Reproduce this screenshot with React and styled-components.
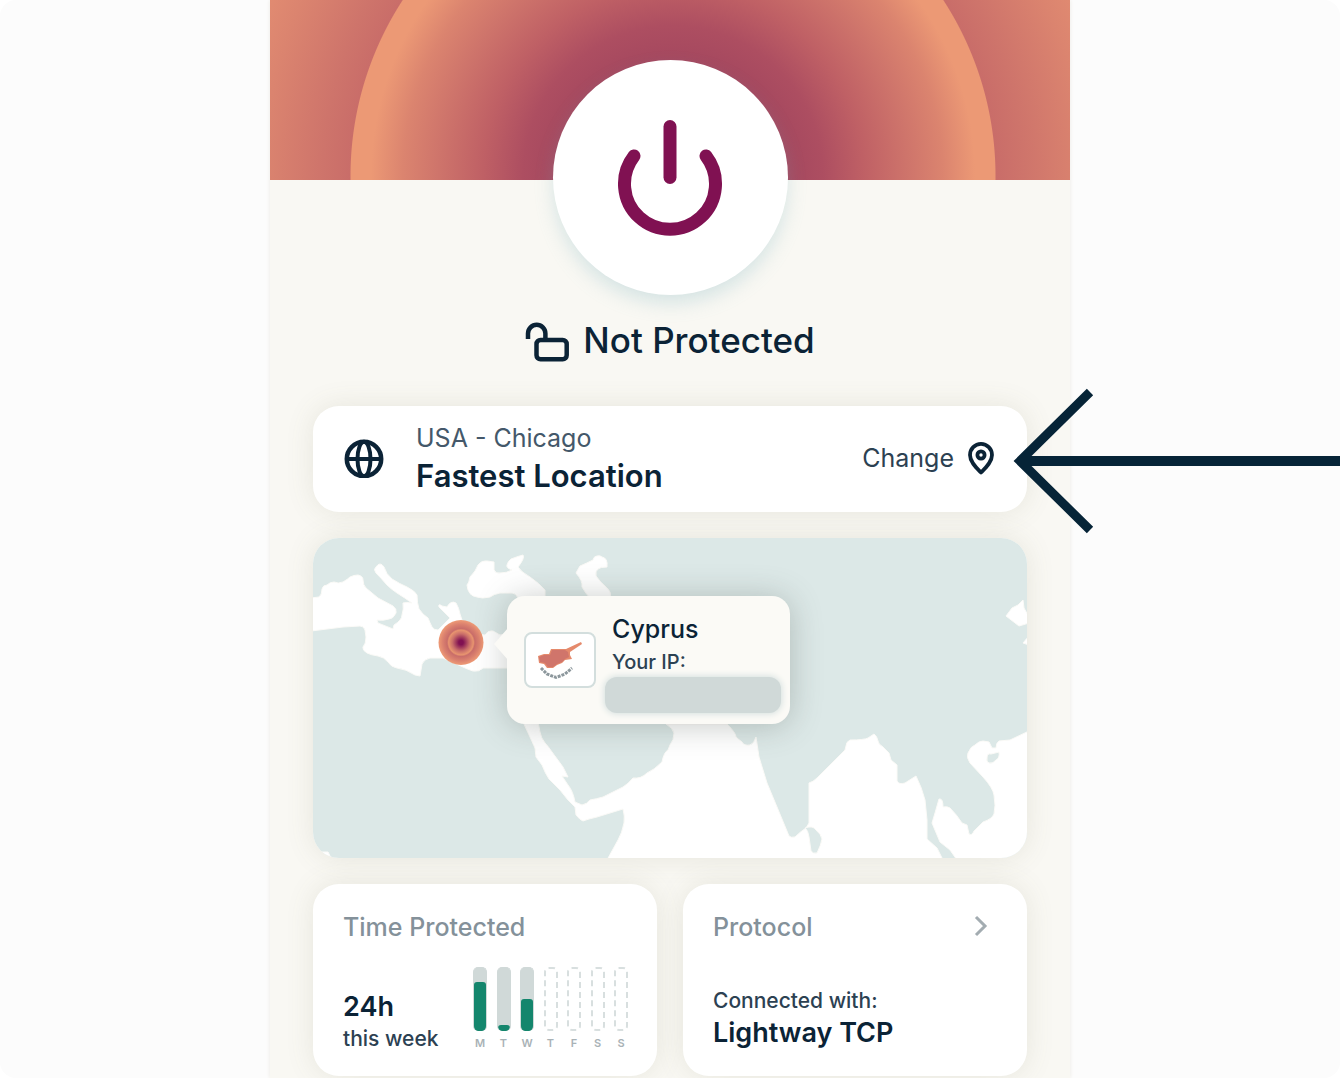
import styled, { createGlobalStyle } from "styled-components";

const GlobalStyle = createGlobalStyle`
  * {
    box-sizing: border-box;
  }

  body {
    margin: 0;
    background-color: #ffffff;
    color: #0b2336;
    font-family: Inter, "Liberation Sans", sans-serif;
  }

  h1, h2, p {
    margin: 0;
    font-weight: inherit;
  }

  button {
    padding: 0;
    border: none;
    background: none;
    color: inherit;
    font: inherit;
    cursor: pointer;
  }
`;

const Page = styled.div`
  min-height: 100vh;
  display: flex;
  justify-content: center;
  overflow: hidden;
  border-radius: 16px;
  background-color: #fcfcfc;
`;

const AppWindow = styled.main`
  width: 100%;
  max-width: 800px;
  display: flex;
  flex-direction: column;
  background-color: #f9f8f3;
  box-shadow: 0 0 4px #eceae4;
`;

const Hero = styled.div`
  height: 180px;
  background: radial-gradient(
    circle at calc(50% + 3px) 176px,
    #a5485f 116px,
    #ad4e61 150px,
    #bf6065 190px,
    #ce746b 234px,
    #db846f 270px,
    #ec9975 302px,
    #ec9975 322px,
    #c96d69 323px,
    #ce746b 350px,
    #db846f 410px,
    #e38d72 450px
  );
`;

const PowerButton = styled.button`
  width: 235px;
  height: 235px;
  margin: -120px auto 0;
  display: flex;
  align-items: center;
  justify-content: center;
  border-radius: 50%;
  background-color: #ffffff;
  box-shadow: 0 9px 20px -2px rgba(120, 175, 190, 0.3);
`;

const Status = styled.h1`
  margin-top: 23px;
  display: flex;
  align-items: center;
  justify-content: center;
  gap: 14px;
  font-size: 35px;
  font-weight: 500;
  line-height: 44px;
`;

const Content = styled.div`
  margin-top: 44px;
  padding: 0 43px 2px;
  display: flex;
  flex-direction: column;
  gap: 26px;
`;

const Card = styled.section`
  border-radius: 26px;
  background-color: #ffffff;
  box-shadow: 0 0 28px rgba(110, 105, 80, 0.13);
`;

const LocationCard = styled(Card)`
  position: relative;
  min-height: 106px;
  padding: 13px 32px 15px 31px;
  display: flex;
  align-items: center;
  gap: 32px;
`;

const LocationText = styled.div`
  flex: 1;
`;

const Region = styled.p`
  font-size: 25px;
  line-height: 36px;
  color: #44586a;
`;

const LocationName = styled.h2`
  font-size: 31px;
  font-weight: 600;
  line-height: 40px;
`;

const ChangeButton = styled.button`
  display: flex;
  align-items: center;
  gap: 13px;
  font-size: 25px;
  line-height: 36px;
  color: #2c4152;

  svg {
    color: #0b2336;
  }
`;

const Pointer = styled.svg`
  position: absolute;
  top: -18px;
  left: calc(100% - 14px);
  width: 50vw;
  height: 146px;
  stroke: #062437;
  fill: none;
  pointer-events: none;
`;

const MapCard = styled(Card)`
  position: relative;
  height: 320px;
`;

const WorldMap = styled.svg`
  display: block;
  width: 100%;
  height: 100%;
  border-radius: 26px;
  background-color: #dce8e7;
`;

const Popover = styled.div`
  position: absolute;
  top: 58px;
  left: 194px;
  width: 283px;
  height: 128px;
  padding: 0 8px 0 17px;
  display: flex;
  align-items: center;
  gap: 16px;
  border-radius: 18px;
  background-color: #fbfaf6;
  box-shadow: 0 2px 32px rgba(80, 90, 85, 0.32);

  &::before {
    content: "";
    position: absolute;
    top: 32px;
    left: -13px;
    border: 16px solid transparent;
    border-left: none;
    border-right: 14px solid #fbfaf6;
  }
`;

const Flag = styled.div`
  flex: none;
  width: 72px;
  height: 56px;
  display: flex;
  align-items: center;
  justify-content: center;
  border: 2px solid #d3dedd;
  border-radius: 8px;
  background-color: #ffffff;
`;

const PopoverText = styled.div`
  flex: 1;
  padding-top: 4px;
`;

const Country = styled.p`
  font-size: 25px;
  font-weight: 500;
  line-height: 36px;
`;

const IpLabel = styled.p`
  font-size: 20px;
  font-weight: 500;
  line-height: 30px;
  color: #2c4152;
`;

const HiddenIp = styled.div`
  height: 36px;
  margin-left: -7px;
  margin-right: 1px;
  border-radius: 12px;
  background-color: #d0d9d8;
  box-shadow: 0 0 6px 1px #d5e0df;
`;

const Stats = styled.div`
  display: grid;
  grid-template-columns: 1fr 1fr;
  gap: 26px;
`;

const StatCard = styled(Card)`
  min-height: 192px;
  padding: 25px 29px 21px 30px;
  display: flex;
  flex-direction: column;
  justify-content: space-between;
`;

const StatHeader = styled.div`
  display: flex;
  align-items: center;
  justify-content: space-between;
  color: #84919a;
`;

const StatTitle = styled.h2`
  font-size: 25px;
  font-weight: 500;
  line-height: 36px;
`;

const ProtocolButton = styled.button`
  height: 24px;
  padding: 0 10px;
  color: #a3acb1;
`;

const StatBody = styled.div`
  display: flex;
  align-items: flex-end;
  justify-content: space-between;
`;

const ProtocolDetails = styled.div`
  padding-bottom: 6px;
`;

const StatValue = styled.p`
  font-size: 27px;
  font-weight: 600;
  line-height: 32px;
`;

const StatNote = styled.p`
  font-size: 21px;
  font-weight: 500;
  line-height: 32px;
  color: #2c4152;
`;

const Chart = styled.div`
  width: 155px;
  display: flex;
  justify-content: space-between;
`;

const Day = styled.div`
  width: 14px;
  display: flex;
  flex-direction: column;
  align-items: center;
  font-size: 11px;
  font-weight: 600;
  line-height: 24px;
  color: #a9b2b6;
`;

const Track = styled.div`
  width: 14px;
  height: 64px;
  display: flex;
  align-items: flex-end;
  overflow: hidden;
  border: ${(props) => (props.$empty ? "2px dashed #d8dfdf" : "1px solid #d0d9d8")};
  border-bottom-width: ${(props) => (props.$empty ? "2px" : "0")};
  border-radius: 5px;
  background-color: ${(props) => (props.$empty ? "#ffffff" : "#d0d9d8")};
`;

const Fill = styled.div`
  width: 100%;
  border-radius: 3px;
  background-color: #14866d;
`;

const days = [
  { label: "M", percent: 78 },
  { label: "T", percent: 10 },
  { label: "W", percent: 51 },
  { label: "T", percent: 0 },
  { label: "F", percent: 0 },
  { label: "S", percent: 0 },
  { label: "S", percent: 0 },
];

function PowerIcon() {
  return (
    <svg width="106" height="120" viewBox="0 0 106 120" fill="none" stroke="#801152" strokeWidth="13" strokeLinecap="round">
      <path d="M53 8.500V59.500" />
      <path d="M17 38a45.500 45.500 0 1 0 72 0" />
    </svg>
  );
}

function UnlockIcon() {
  return (
    <svg width="44" height="44" viewBox="0 0 44 44" fill="none" stroke="currentColor" strokeWidth="4.500">
      <path d="M3 21V15.500a8.700 8.700 0 0 1 17.400 0V22" />
      <rect x="11.500" y="22" width="30.200" height="19.300" rx="4" />
    </svg>
  );
}

function GlobeIcon() {
  return (
    <svg width="40" height="40" viewBox="0 0 40 40" fill="none" stroke="currentColor" strokeWidth="4.500">
      <circle cx="20" cy="21" r="17.200" />
      <ellipse cx="20" cy="21" rx="6.500" ry="17.200" strokeWidth="4" />
      <path d="M3 21H37" strokeWidth="4" />
    </svg>
  );
}

function PinIcon() {
  return (
    <svg width="28" height="34" viewBox="0 0 28 34" fill="none" stroke="currentColor" strokeWidth="3.800">
      <path d="M14 31.500C9 26.500 3 21 3 14a11 11.200 0 0 1 22 0C25 21 19 26.500 14 31.500Z" strokeLinejoin="round" />
      <circle cx="14" cy="14" r="3.600" />
    </svg>
  );
}

function CyprusIcon() {
  return (
    <svg width="46" height="40" viewBox="0 0 46 40">
      <path
        d="M1 16L2 23 7 24 10 28 16 28 20 25 25 23 28 20 35 19 33 15 33 12 45 4 44 2 29 9 14 9 12 14 7 14Z"
        fill="#e58a6c"
      />
      <path d="M2 17L3 22 8 23 11 27 16 27 20 24 25 22 28 19 32 17 31 12 28 10 15 10 13 15 7 15Z" fill="#d0756b" />
      <path d="M4 28L10 34 19 37.500 28 34 35 28" fill="none" stroke="#8c979c" strokeWidth="3" strokeDasharray="3 1" />
    </svg>
  );
}

function Seas() {
  return (
    <g fill="#ffffff" stroke="#fbfaf7" strokeWidth="1" strokeLinejoin="round">
      {/* Mediterranean */}
      <path d="M-2 60L6 59Q9 57 9 51 10 47 14 47 17 44 21 44 25 46 30 44 35 41 37 39 41 37 45 37 50 38 50 42 50 47 53 50L65 60 80 68Q84 71 83 75 80 81 76 81 70 83 64 82L65 85 80 91 81 87Q89 82 89 77 91 71 90 65 93 64 99 65 92 60 84 55 78 51 74 47 68 40 63 35 60 31 63 29 67 23 71 29 73 36 79 41 87 46 94 49 102 53 104 57 104 65 106 71 110 77 115 80 117 85 119 89 121 92 125 92L137 80 126 69Q125 65 129 68L134 69Q138 62 143 65 146 70 147 76L149 82 160 96 172 97Q175 92 180 93L187 97 196 95V130H170Q166 134 160 133 154 131 150 129L130 120H117Q111 121 109 126L107 138 102 137Q93 131 84 130 78 129 75 124 71 119 65 118 58 117 54 115 49 112 50 109 53 106 53 99L52 92Q51 88 47 88L30 89-2 93Z" />
      {/* Black Sea */}
      <path d="M154 47Q156 45 157 39 163 33 165 27 169 22 174 23L181 24 181 32Q183 36 187 35 194 35 199 32 193 30 194 27 195 23 198 21 206 18 210 17 212 20 205 29 208 34 217 39 227 46 232 52V60H205Q203 55 199 55H187Q181 56 177 59 169 61 164 59 155 58 154 47Z" />
      {/* Caspian Sea */}
      <path d="M263 35Q265 31 267 28 274 25 280 22 281 18 284 18 287 17 289 19 295 20 294 29 287 29 285 31 282 33 283 38 287 44 294 50 298 53 298 60H277Q273 56 269 49 270 43 263 35Z" />
      {/* Red Sea and Indian Ocean */}
      <path d="M210 184L217 199 222 210 223 219 229 227Q232 235 236 241L247 252 255 262 262 269 263 277Q267 282 270 283 275 281 284 279L310 271Q312 278 311 285 309 295 305 302L294 322H630L624 310 614 301 614 282 612 262Q609 250 603 238L592 245Q586 247 584 243V227L578 222 576 215 570 209Q565 206 565 203 564 198 561 196L555 200Q551 202 537 202 533 204 533 208L532 212 504 240Q500 244 496 245V285L493 290Q487 294 482 299 478 300 476 298L464 269 454 245 446 219 443 199Q441 206 437 207 431 208 429 204 425 201 423 199 423 195 414 186H353Q360 190 361 195 361 202 357 207L355 212Q351 214 349 224 341 232 334 235 328 241 320 240 315 246 310 249L290 259Q283 261 277 262 274 266 269 267L262 264Q260 253 255 247L249 238 255 239 250 229 239 214Q235 208 232 205 228 200 227 194L225 184Z" />
      {/* South China Sea */}
      <path d="M644 322L637 312 627 304 619 285 622 275 626 261Q630 260 630 269 634 268 637 270 644 277 649 285L654 287 656 296Q659 298 661 293L670 284Q679 281 681 276 683 268 681 257 680 250 670 239L657 225Q653 219 655 215 658 208 662 207 666 203 670 203L676 204 679 210 683 210Q683 205 686 203L697 202 716 193V322Z" />
      {/* Yellow Sea */}
      <path d="M710 62L711 70 716 79 716 85 706 88 693 78 699 70 705 67Z" />
      <path d="M716 98L710 105 716 107Z" />
      <path d="M7 314L15 314 19 322 4 322Z" />
      {/* Sri Lanka and Hainan */}
      <path d="M492 290Q500 287 503 292 508 296 509 301 508 307 504 315 500 316 498 313L496 299Q495 292 492 290Z" fill="#dce8e7" />
      <path d="M674 220Q674 215 678 216L686 214Q687 220 683 222 680 226 676 225 673 224 674 220Z" fill="#dce8e7" />
    </g>
  );
}

function LocationMarker() {
  return (
    <g>
      <radialGradient id="marker">
        <stop offset="0" stopColor="#801152" />
        <stop offset="0.100" stopColor="#801152" />
        <stop offset="0.380" stopColor="#c96d69" />
        <stop offset="0.550" stopColor="#e8946f" />
        <stop offset="0.620" stopColor="#c96d69" />
        <stop offset="0.820" stopColor="#dc826f" />
        <stop offset="1" stopColor="#ee9b76" />
      </radialGradient>
      <circle cx="148" cy="104.500" r="22.500" fill="url(#marker)" />
    </g>
  );
}

export default function App() {
  return (
    <>
      <GlobalStyle />
      <Page>
        <AppWindow>
          <Hero />
          <PowerButton aria-label="Connect">
            <PowerIcon />
          </PowerButton>
          <Status>
            <UnlockIcon />
            Not Protected
          </Status>
          <Content>
            <LocationCard>
              <GlobeIcon />
              <LocationText>
                <Region>USA - Chicago</Region>
                <LocationName>Fastest Location</LocationName>
              </LocationText>
              <ChangeButton>
                Change
                <PinIcon />
              </ChangeButton>
              <Pointer>
                <polyline points="77,4 7,73 77,142" strokeWidth="9" />
                <line x1="8" y1="73" x2="100%" y2="73" strokeWidth="10" />
              </Pointer>
            </LocationCard>
            <MapCard>
              <WorldMap viewBox="0 0 714 320" preserveAspectRatio="xMinYMid slice">
                <Seas />
                <LocationMarker />
              </WorldMap>
              <Popover>
                <Flag>
                  <CyprusIcon />
                </Flag>
                <PopoverText>
                  <Country>Cyprus</Country>
                  <IpLabel>Your IP:</IpLabel>
                  <HiddenIp />
                </PopoverText>
              </Popover>
            </MapCard>
            <Stats>
              <StatCard>
                <StatHeader>
                  <StatTitle>Time Protected</StatTitle>
                </StatHeader>
                <StatBody>
                  <div>
                    <StatValue>24h</StatValue>
                    <StatNote>this week</StatNote>
                  </div>
                  <Chart>
                    {days.map((day, index) => (
                      <Day key={index}>
                        <Track $empty={day.percent === 0}>
                          {day.percent > 0 && <Fill style={{ height: `${day.percent}%` }} />}
                        </Track>
                        {day.label}
                      </Day>
                    ))}
                  </Chart>
                </StatBody>
              </StatCard>
              <StatCard>
                <StatHeader>
                  <StatTitle>Protocol</StatTitle>
                  <ProtocolButton aria-label="Change protocol">
                    <svg width="14" height="22" viewBox="0 0 14 22" fill="none" stroke="currentColor" strokeWidth="3">
                      <path d="M2 2L11 11L2 20" />
                    </svg>
                  </ProtocolButton>
                </StatHeader>
                <ProtocolDetails>
                  <StatNote>Connected with:</StatNote>
                  <StatValue>Lightway TCP</StatValue>
                </ProtocolDetails>
              </StatCard>
            </Stats>
          </Content>
        </AppWindow>
      </Page>
    </>
  );
}
